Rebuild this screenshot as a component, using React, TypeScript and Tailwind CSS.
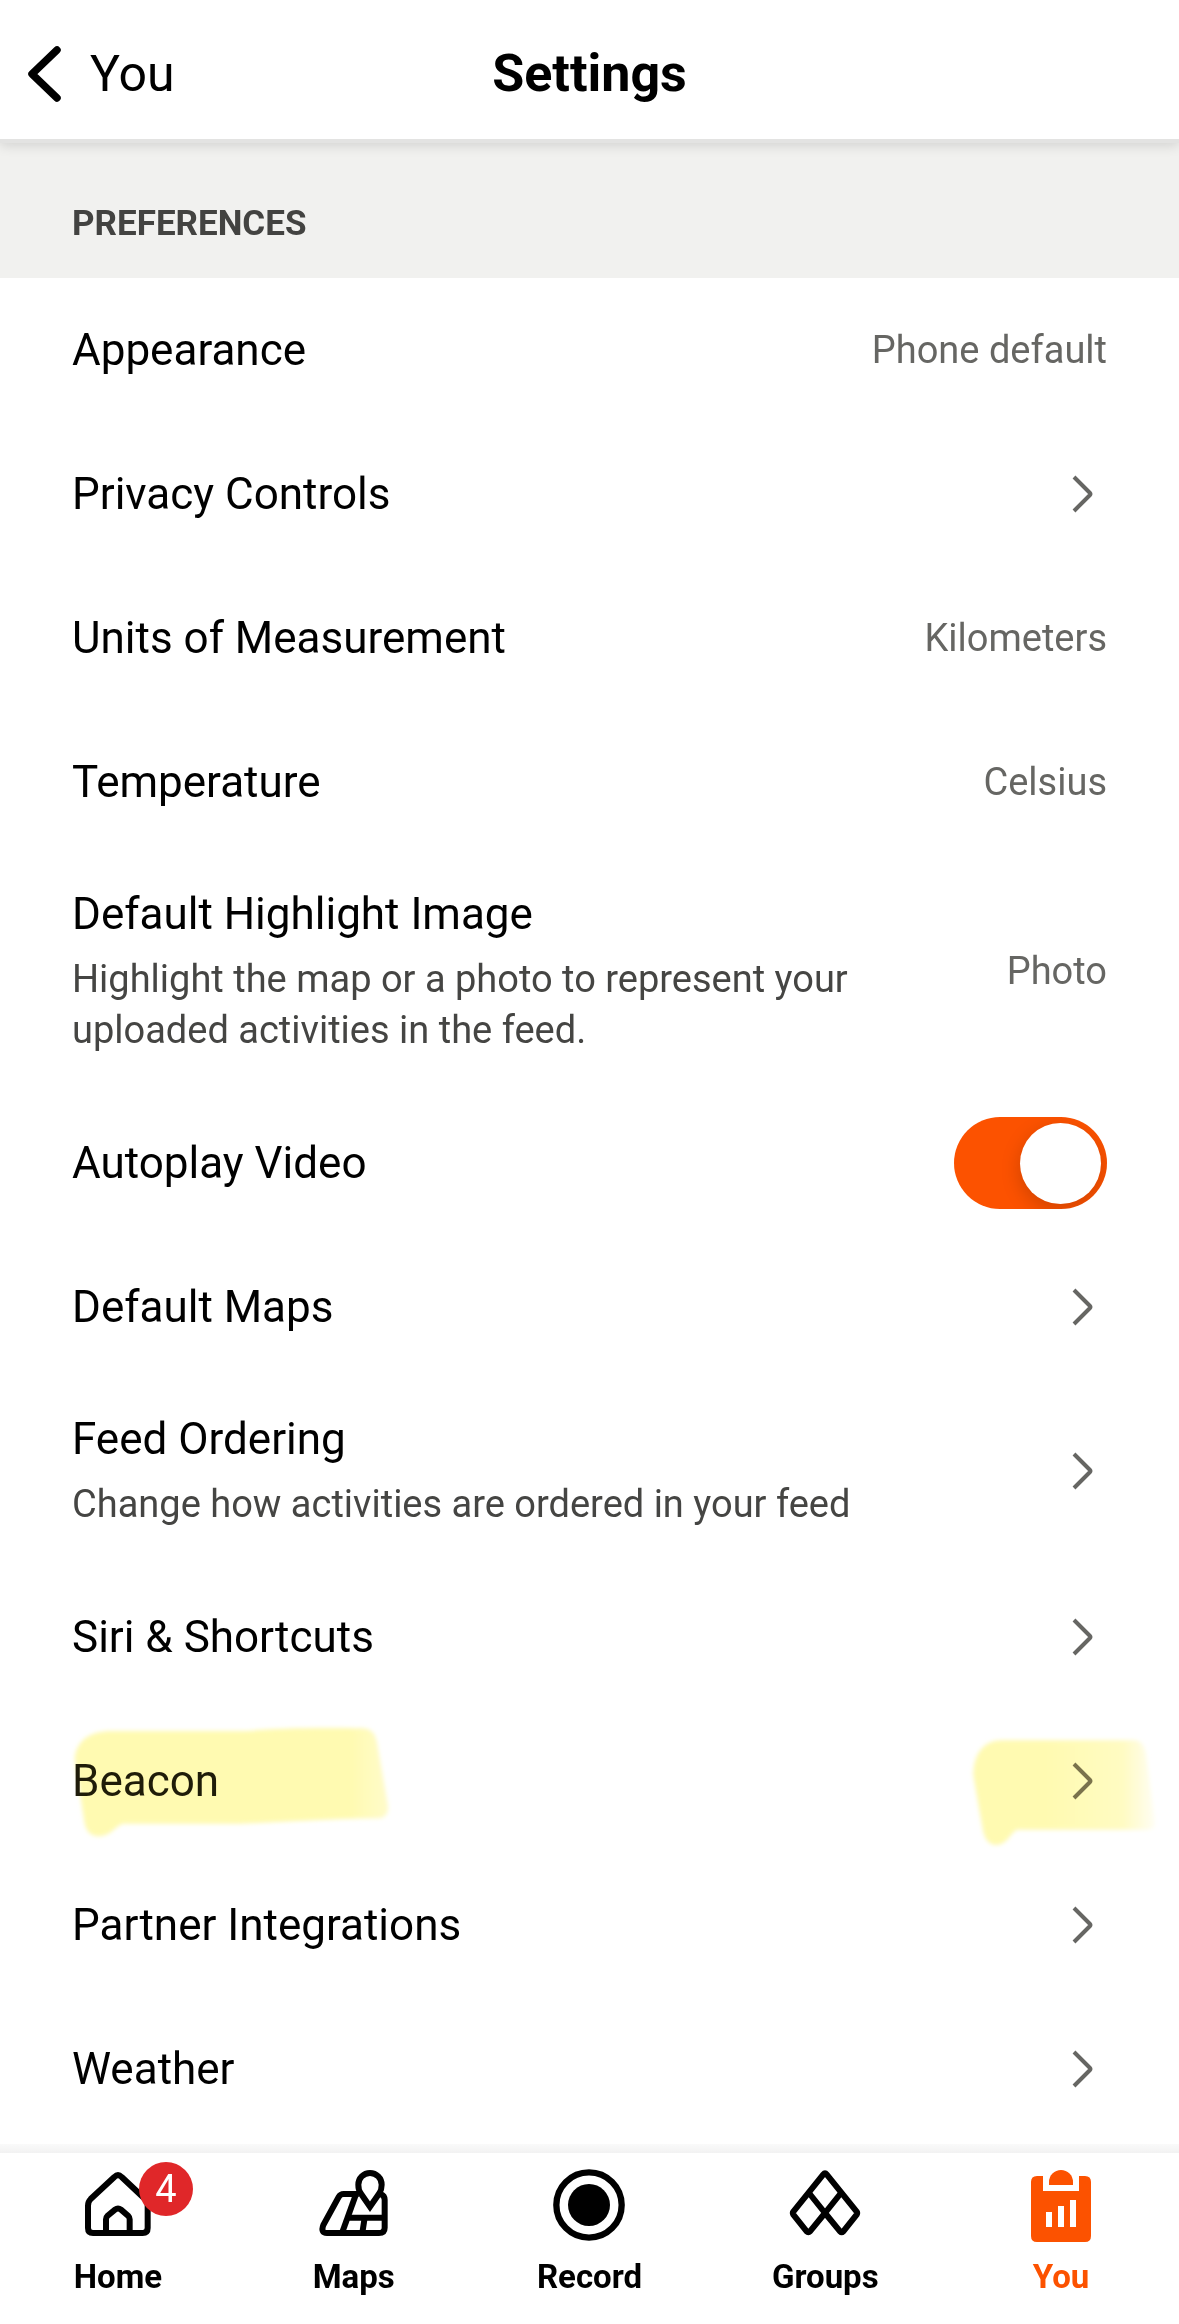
import React, { useState } from "react";
import clsx from "clsx";

// --- Types ---
interface SettingItem {
  id: string;
  title: string;
  description?: string;
  value?: string;
  kind: "value" | "link" | "toggle";
  marked?: boolean;
}

interface TabItem {
  id: string;
  label: string;
  icon: React.ReactNode;
  badge?: number;
  active?: boolean;
}

// --- Icons ---
const BackIcon = () => (
  <svg className="h-[60px] w-9" viewBox="0 0 36 60" fill="none" stroke="currentColor" strokeWidth="7.5" strokeLinecap="round" strokeLinejoin="round" aria-hidden="true">
    <path d="M31 6 L6 30 L31 54" />
  </svg>
);

const ChevronIcon = ({ className }: { className?: string }) => (
  <svg className={clsx("h-12 w-12 shrink-0", className)} viewBox="0 0 48 48" fill="none" stroke="currentColor" strokeWidth="4" aria-hidden="true">
    <path d="M15 7 L31 23 Q32 24 31 25 L15 41" />
  </svg>
);

const HomeIcon = () => (
  <svg className="h-[72px] w-[72px]" viewBox="0 0 216 216" fill="none" stroke="currentColor" strokeWidth="18" aria-hidden="true">
    <path d="M18 110 Q18 98 26 90 L97 24 Q108 13 119 24 L189 90 Q197 98 197 110 V177 Q197 192 182 192 H33 Q18 192 18 177 Z" />
    <path d="M72 192 V151 Q72 145 77 140 L99 122 Q108 115 117 122 L138 140 Q143 145 143 151 V192" />
  </svg>
);

const MapsIcon = () => (
  <svg className="h-[72px] w-[72px]" viewBox="0 0 216 216" fill="none" stroke="currentColor" strokeWidth="18" aria-hidden="true">
    <path d="M122 75 H77 Q67 75 62 84 L16 168 Q7 192 27 192 H183 Q200 192 200 176 V92 Q200 80 188 75" />
    <path d="M114 76 L72 192" />
    <path d="M92 146 H200" />
    <path d="M140 146 L133 192" />
    <path d="M156 113 L128 73 C122 64 121 56 121 47 A35 35 0 0 1 191 47 C191 56 190 64 184 73 Z" fill="white" />
  </svg>
);

const RecordIcon = () => (
  <svg className="h-[72px] w-[72px]" viewBox="0 0 216 216" fill="none" aria-hidden="true">
    <circle cx="108" cy="108" r="98" stroke="currentColor" strokeWidth="19" />
    <circle cx="108" cy="108" r="63" fill="currentColor" />
  </svg>
);

const GroupsIcon = () => (
  <svg className="h-[72px] w-[72px]" viewBox="0 0 216 216" fill="none" stroke="currentColor" strokeWidth="18" strokeLinejoin="round" aria-hidden="true">
    <path d="M103 16 Q108 10 113 16 L203 128 Q206 132 203 137 L163 187 Q158 192 153 187 L108 132 L63 187 Q58 192 53 187 L13 137 Q10 132 13 128 Z" />
    <path d="M60 72 L108 132 L156 72" />
  </svg>
);

const YouIcon = () => (
  <svg className="h-[72px] w-[72px] overflow-visible" viewBox="0 0 216 216" fill="currentColor" aria-hidden="true">
    <path
      fillRule="evenodd"
      d="M36 21 H54 V66 H162 V21 H180 Q198 21 198 39 V201 Q198 219 180 219 H36 Q18 219 18 201 V39 Q18 21 36 21 Z M63 129 V174 H81 V129 Z M99 111 V174 H117 V111 Z M135 93 V174 H153 V93 Z"
    />
    <path d="M72 48 V39 A36 36 0 0 1 144 39 V48 Z" />
  </svg>
);

// --- Marker strokes over a row ---
const MarkerStrokes = () => (
  <>
    <svg className="pointer-events-none absolute top-0 left-10 h-[150px] w-[400px] mix-blend-multiply" viewBox="0 0 1200 450" aria-hidden="true">
      <defs>
        <filter id="soft-left" x="-5%" y="-10%" width="110%" height="120%">
          <feGaussianBlur stdDeviation="6" />
        </filter>
        <linearGradient id="fade-left" x1="0" x2="1">
          <stop offset="0.88" stopColor="#fffab1" />
          <stop offset="1" stopColor="#fffbca" />
        </linearGradient>
      </defs>
      <path
        d="M104 150 C108 95 150 66 215 66 H620 C720 58 800 56 970 58 Q1002 60 1010 95 L1044 290 Q1048 328 1010 328 C860 330 720 340 600 344 H250 C225 350 215 382 170 382 Q142 378 134 345 Z"
        fill="url(#fade-left)"
        filter="url(#soft-left)"
      />
    </svg>
    <svg className="pointer-events-none absolute top-0 right-0 h-[170px] w-[249px] mix-blend-multiply" viewBox="0 0 747 510" aria-hidden="true">
      <defs>
        <filter id="soft-right" x="-5%" y="-10%" width="110%" height="120%">
          <feGaussianBlur stdDeviation="6" />
        </filter>
        <linearGradient id="fade-right" x1="0" x2="1">
          <stop offset="0.4" stopColor="#fffab1" />
          <stop offset="0.82" stopColor="#fffbc2" />
          <stop offset="1" stopColor="#fffef4" />
        </linearGradient>
      </defs>
      <path
        d="M130 200 C130 130 165 94 215 94 H615 Q645 96 650 150 L676 345 Q676 362 650 362 H262 C240 370 235 408 195 408 Q165 404 158 360 Z"
        fill="url(#fade-right)"
        filter="url(#soft-right)"
      />
    </svg>
  </>
);

// --- Data ---
const settings: SettingItem[] = [
  { id: "appearance", title: "Appearance", value: "Phone default", kind: "value" },
  { id: "privacy", title: "Privacy Controls", kind: "link" },
  { id: "units", title: "Units of Measurement", value: "Kilometers", kind: "value" },
  { id: "temperature", title: "Temperature", value: "Celsius", kind: "value" },
  {
    id: "highlight",
    title: "Default Highlight Image",
    description: "Highlight the map or a photo to represent your uploaded activities in the feed.",
    value: "Photo",
    kind: "value",
  },
  { id: "autoplay", title: "Autoplay Video", kind: "toggle" },
  { id: "maps", title: "Default Maps", kind: "link" },
  { id: "feed", title: "Feed Ordering", description: "Change how activities are ordered in your feed", kind: "link" },
  { id: "siri", title: "Siri & Shortcuts", kind: "link" },
  { id: "beacon", title: "Beacon", kind: "link", marked: true },
  { id: "partners", title: "Partner Integrations", kind: "link" },
  { id: "weather", title: "Weather", kind: "link" },
];

const tabs: TabItem[] = [
  { id: "home", label: "Home", icon: <HomeIcon />, badge: 4 },
  { id: "maps", label: "Maps", icon: <MapsIcon /> },
  { id: "record", label: "Record", icon: <RecordIcon /> },
  { id: "groups", label: "Groups", icon: <GroupsIcon /> },
  { id: "you", label: "You", icon: <YouIcon />, active: true },
];

// --- Row ---
const SettingRow = ({ item }: { item: SettingItem }) => {
  const [enabled, setEnabled] = useState(true);

  const rowClass = clsx(
    "relative flex w-full items-center justify-between gap-8 px-18 text-left",
    item.description ? "pt-8 pb-[35px]" : "py-11"
  );

  const text = (
    <span className="flex max-w-[800px] flex-col gap-3">
      <span className={clsx("text-[44px] leading-[56px]", item.marked ? "text-[#1f1c0c]" : "text-black")}>
        {item.title}
      </span>
      {item.description && (
        <span className="text-[38px] leading-[51px] text-[#454543]">{item.description}</span>
      )}
    </span>
  );

  if (item.kind === "toggle") {
    return (
      <div className="flex h-36 items-center justify-between gap-8 px-18">
        <label htmlFor={item.id} className="text-[44px] leading-[56px] text-black">
          {item.title}
        </label>
        <input
          id={item.id}
          type="checkbox"
          role="switch"
          checked={enabled}
          onChange={(e) => setEnabled(e.target.checked)}
          className="flex h-[92px] w-[153px] shrink-0 cursor-pointer appearance-none items-center overflow-hidden rounded-full bg-gray-300 px-[6px] before:h-[81px] before:w-[81px] before:rounded-full before:bg-white before:shadow-[0_6px_20px_rgba(0,0,0,0.18)] checked:justify-end checked:bg-[#fc5200]"
        />
      </div>
    );
  }

  if (item.kind === "value") {
    return (
      <button type="button" className={rowClass}>
        {text}
        <span className="shrink-0 text-[38px] leading-[51px] text-[#666663]">{item.value}</span>
      </button>
    );
  }

  return (
    <a href={`#${item.id}`} className={rowClass}>
      {text}
      <ChevronIcon className={item.marked ? "text-[#7a7468]" : "text-[#666663]"} />
      {item.marked && <MarkerStrokes />}
    </a>
  );
};

// --- Page ---
export default function App() {
  return (
    <div className="flex min-h-screen flex-col bg-white font-['Roboto','Liberation_Sans',sans-serif] text-black">
      <header className="relative z-10 grid grid-cols-3 items-center border-b-4 border-[#e3e3e2] bg-white pt-[34px] pb-[25px] shadow-[0_2px_12px_rgba(0,0,0,0.14)]">
        <a href="#you" className="flex h-20 items-center gap-7 pl-[26px] text-[50px] leading-[60px]">
          <BackIcon />
          You
        </a>
        <h1 className="text-center text-[52px] leading-[60px] font-bold">Settings</h1>
      </header>

      <main className="flex-1">
        <h2 className="bg-[#f1f1ef] px-18 pt-[61px] pb-[34px] text-[35px] leading-10 font-bold text-[#434341]">
          PREFERENCES
        </h2>
        <div>
          {settings.map((item) => (
            <SettingRow key={item.id} item={item} />
          ))}
        </div>
      </main>

      <div className="h-[9px] bg-linear-to-b from-[#fafafa] to-[#f2f2f2]" aria-hidden="true" />
      <nav className="grid grid-cols-5 bg-white pt-4 pb-[27px]">
        {tabs.map((tab) => (
          <a
            key={tab.id}
            href={`#tab-${tab.id}`}
            aria-current={tab.active ? "page" : undefined}
            className={clsx("flex flex-col items-center gap-4", tab.active ? "text-[#fc5200]" : "text-black")}
          >
            <span className="relative">
              {tab.icon}
              {tab.badge && (
                <span className="absolute -top-[7px] left-[57px] flex h-[54px] w-[54px] items-center justify-center rounded-full bg-[#e02729] text-[38px] leading-none text-white">
                  {tab.badge}
                </span>
              )}
            </span>
            <span className="text-[33px] leading-10 font-bold">{tab.label}</span>
          </a>
        ))}
      </nav>
    </div>
  );
}
